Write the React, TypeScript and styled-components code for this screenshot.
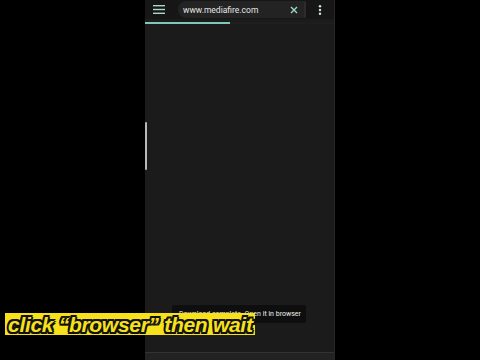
import React from "react";
import styled, { createGlobalStyle } from "styled-components";

const Global = createGlobalStyle`
  html, body { margin: 0; padding: 0; background: #000; }
  body { font-family: "Roboto", "Liberation Sans", sans-serif; }
  #root { width: 480px; height: 360px; overflow: hidden; }
`;

const Page = styled.div`
  width: 480px;
  height: 360px;
  background: #000;
  display: flex;
  justify-content: center;
  position: relative;
  overflow: hidden;
`;

const Phone = styled.div`
  width: 190px;
  height: 360px;
  background: #1b1b1b;
  display: flex;
  flex-direction: column;
  position: relative;
  border-right: 1px solid #262626;
  box-sizing: border-box;
`;

const TopBar = styled.div`
  height: 19px;
  background: #161616;
  display: flex;
  align-items: center;
  padding: 0 6px 0 6px;
  gap: 6px;
`;

const IconBtn = styled.div<{ $w?: number }>`
  width: ${(p) => p.$w ?? 16}px;
  height: 16px;
  display: flex;
  align-items: center;
  justify-content: center;
  flex-shrink: 0;
`;

const UrlPill = styled.div`
  flex: 1;
  height: 17px;
  background: #232323;
  border-radius: 9px 2px 2px 9px;
  display: flex;
  align-items: center;
  padding-left: 5px;
  margin-left: 5px;
  border-right: 2px solid #2c2c2c;
`;

const UrlText = styled.span`
  flex: 1;
  color: #e6e6e6;
  font-size: 8.5px;
  font-family: "Roboto", "Liberation Sans", sans-serif;
`;

const Progress = styled.div`
  height: 2px;
  margin-top: 3px;
  background: #1e1e1e;
`;

const ProgressFill = styled.div`
  height: 100%;
  background: #7fc8b8;
`;

const Body = styled.div`
  flex: 1;
  position: relative;
`;

const ScrollThumb = styled.div`
  position: absolute;
  left: 0;
  top: 98px;
  width: 2px;
  height: 48px;
  background: #b8b8b8;
  border-radius: 1px;
`;

const Toast = styled.div`
  position: absolute;
  left: 27px;
  top: 281px;
  height: 18px;
  padding: 0 5px 0 7px;
  background: #0e0e0e;
  color: #f0f0f0;
  font-size: 7px;
  display: flex;
  align-items: center;
  border-radius: 2px;
`;

const NavBar = styled.div`
  height: 7px;
  background: #222;
  border-top: 1px solid #333;
`;

const Caption = styled.div`
  position: absolute;
  left: 5px;
  top: 313px;
  height: 22px;
  padding: 0 2px 0 3px;
  background: #f7e11a;
  display: flex;
  align-items: center;
  font-family: "Liberation Sans", Arial, sans-serif;
  font-weight: 700;
  font-style: italic;
  font-size: 21px;
  letter-spacing: -0.3px;
  color: #f7e11a;
  text-shadow:
    -1.6px -1.6px 0 #111, 1.6px -1.6px 0 #111, -1.6px 1.6px 0 #111, 1.6px 1.6px 0 #111,
    0 -2px 0 #111, 0 2px 0 #111, -2px 0 0 #111, 2px 0 0 #111;
  white-space: nowrap;
  line-height: 1;
`;

export default function App() {
  return (
    <>
      <Global />
      <Page>
        <Phone>
          <TopBar>
            <IconBtn>
              <svg width="12" height="9" viewBox="0 0 12 9">
                <rect x="0" y="0" width="12" height="1.4" fill="#a8d8c8" />
                <rect x="0" y="3.8" width="12" height="1.4" fill="#a8d8c8" />
                <rect x="0" y="7.6" width="12" height="1.4" fill="#a8d8c8" />
              </svg>
            </IconBtn>
            <UrlPill>
              <UrlText>www.mediafire.com</UrlText>
              <IconBtn $w={20}>
                <svg width="8" height="8" viewBox="0 0 8 8">
                  <path d="M1 1 L7 7 M7 1 L1 7" stroke="#9fd6c4" strokeWidth="1.4" />
                </svg>
              </IconBtn>
            </UrlPill>
            <IconBtn>
              <svg width="4" height="10" viewBox="0 0 4 10">
                <circle cx="2" cy="1.3" r="1.2" fill="#cfe8df" />
                <circle cx="2" cy="5" r="1.2" fill="#cfe8df" />
                <circle cx="2" cy="8.7" r="1.2" fill="#cfe8df" />
              </svg>
            </IconBtn>
          </TopBar>
          <Progress>
            <ProgressFill style={{ width: "45%" }} />
          </Progress>
          <Body>
            <ScrollThumb />
            <Toast>Download complete. Open it in browser</Toast>
          </Body>
          <NavBar />
        </Phone>
        <Caption>click “browser” then wait</Caption>
      </Page>
    </>
  );
}
